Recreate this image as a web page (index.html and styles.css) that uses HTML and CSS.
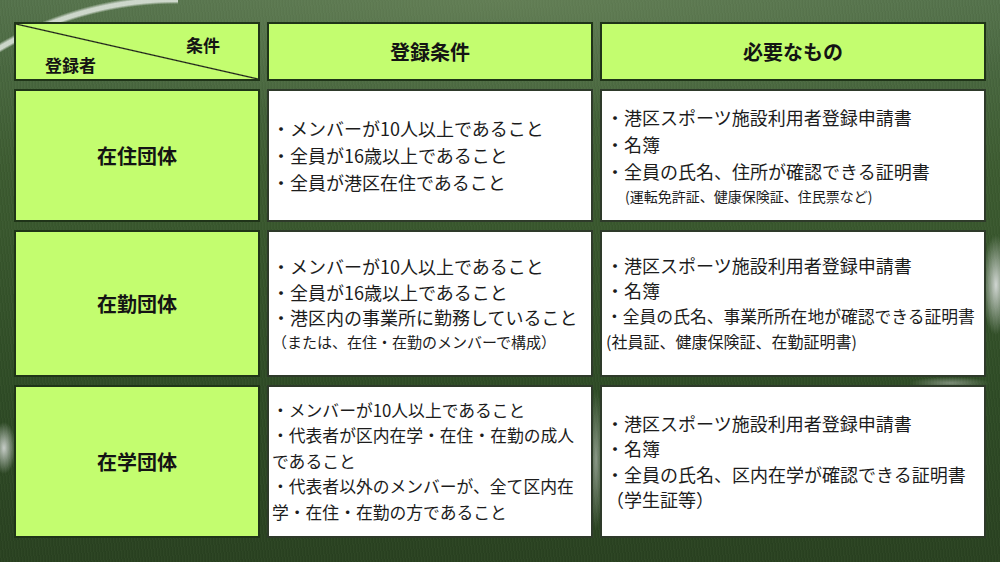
FILE: index.html
```html
<!DOCTYPE html>
<html lang="ja">
<head>
<meta charset="utf-8">
<title>登録条件</title>
<link rel="stylesheet" href="styles.css">
</head>
<body>
<div class="field">
  <div class="table">
    <div class="cell lime corner">
      <span class="c-top">条件</span>
      <span class="c-bottom">登録者</span>
    </div>
    <div class="cell lime head">登録条件</div>
    <div class="cell lime head">必要なもの</div>

    <div class="cell lime rowhead">在住団体</div>
    <div class="cell white col2 lh27">
      <p>・メンバーが10人以上であること</p>
      <p>・全員が16歳以上であること</p>
      <p>・全員が港区在住であること</p>
    </div>
    <div class="cell white col3 lh27">
      <p>・港区スポーツ施設利用者登録申請書</p>
      <p>・名簿</p>
      <p>・全員の氏名、住所が確認できる証明書</p>
      <p class="small indent">(運転免許証、健康保険証、住民票など)</p>
    </div>

    <div class="cell lime rowhead">在勤団体</div>
    <div class="cell white col2">
      <p>・メンバーが10人以上であること</p>
      <p>・全員が16歳以上であること</p>
      <p>・港区内の事業所に勤務していること</p>
      <p class="small15">（または、在住・在勤のメンバーで構成）</p>
    </div>
    <div class="cell white col3">
      <p>・港区スポーツ施設利用者登録申請書</p>
      <p>・名簿</p>
      <p class="s17">・全員の氏名、事業所所在地が確認できる証明書</p>
      <p class="s16">(社員証、健康保険証、在勤証明書)</p>
    </div>

    <div class="cell lime rowhead">在学団体</div>
    <div class="cell white col2 s17">
      <p>・メンバーが10人以上であること</p>
      <p>・代表者が区内在学・在住・在勤の成人<br>であること</p>
      <p>・代表者以外のメンバーが、全て区内在<br>学・在住・在勤の方であること</p>
    </div>
    <div class="cell white col3">
      <p>・港区スポーツ施設利用者登録申請書</p>
      <p>・名簿</p>
      <p>・全員の氏名、区内在学が確認できる証明書</p>
      <p>（学生証等）</p>
    </div>
  </div>
</div>
</body>
</html>
```

FILE: styles.css
```css
html, body {
  margin: 0;
  padding: 0;
}

body {
  width: 1000px;
  height: 562px;
  overflow: hidden;
  font-family: "Noto Sans CJK JP", "Noto Sans", sans-serif;
  color: #1c1c1c;
}

.field {
  width: 1000px;
  height: 562px;
  box-sizing: border-box;
  padding: 22px 0 0 14px;
  background-image:
    radial-gradient(circle 352px at 177px 349px, transparent 345px, rgba(235,240,235,0.8) 347.5px, rgba(235,240,235,0.8) 351px, transparent 354px),
    radial-gradient(ellipse 14px 50px at 996px 285px, rgba(225,228,228,0.9), transparent),
    radial-gradient(ellipse 12px 26px at 4px 448px, rgba(225,228,228,0.85), transparent),
    radial-gradient(ellipse 8px 70px at 596px 460px, rgba(200,205,200,0.6), transparent),
    radial-gradient(ellipse 40px 6px at 950px 383px, rgba(200,205,200,0.5), transparent),
    radial-gradient(ellipse 600px 120px at 500px 0px, rgba(120,145,100,0.45), transparent),
    repeating-linear-gradient(83deg, rgba(0,0,0,0.04) 0 1px, rgba(255,255,255,0.02) 1px 2px, rgba(0,0,0,0) 2px 3px),
    linear-gradient(180deg, #52704a 0%, #3d5c31 30%, #2f4c26 70%, #2a4221 100%);
  background-size:
    178px 95px,
    100% 100%,
    100% 100%,
    100% 100%,
    100% 100%,
    100% 100%,
    100% 100%,
    100% 100%;
  background-position: 0 0;
  background-repeat: no-repeat;
}

.table {
  display: grid;
  grid-template-columns: 246px 326px 386px;
  grid-template-rows: 59px 133px 147px 153px;
  column-gap: 7px;
  row-gap: 8px;
}

.cell {
  box-sizing: border-box;
  border: 2px solid #1f3418;
}

.lime {
  background: #c3fd6f;
}

.white {
  background: #ffffff;
  border-color: #2e3a2a;
}

.corner {
  background: linear-gradient(to top right, #c3fd6f calc(50% - 1.2px), #151515 50%, #c3fd6f calc(50% + 1.2px));
  display: flex;
  flex-direction: column;
  padding-top: 11px;
  font-weight: 700;
  font-size: 17px;
  line-height: 20px;
  color: #141414;
}

.c-top {
  align-self: flex-end;
  margin-right: 38px;
}

.c-bottom {
  align-self: flex-start;
  margin-left: 29px;
}

.head,
.rowhead {
  display: flex;
  align-items: center;
  justify-content: center;
  font-weight: 700;
  font-size: 20px;
  color: #141414;
}

.col2,
.col3 {
  display: flex;
  flex-direction: column;
  justify-content: center;
  font-size: 18px;
  line-height: 25.5px;
}

.col2 {
  padding-left: 3px;
}

.col3 {
  padding-left: 4px;
}

.lh27 {
  line-height: 27px;
}

.col2 p,
.col3 p {
  margin: 0;
  white-space: nowrap;
}

.s17 {
  font-size: 16.8px;
}

.s16 {
  font-size: 16px;
}

.small {
  font-size: 14px;
  line-height: 22px;
}

.indent {
  padding-left: 19px;
}

.small15 {
  font-size: 15px;
  line-height: 22px;
}
```
